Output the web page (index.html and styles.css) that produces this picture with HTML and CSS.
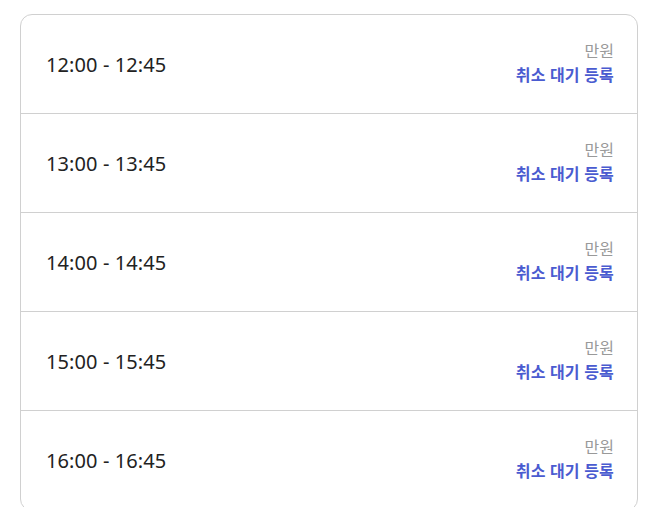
FILE: index.html
```html
<!DOCTYPE html>
<html lang="ko">
<head>
<meta charset="utf-8">
<link rel="stylesheet" href="styles.css">
</head>
<body>
<div class="card">
  <div class="row"><div class="time">12:00 - 12:45</div><div class="side"><div class="price">만원</div><a class="link">취소 대기 등록</a></div></div>
  <div class="row"><div class="time">13:00 - 13:45</div><div class="side"><div class="price">만원</div><a class="link">취소 대기 등록</a></div></div>
  <div class="row"><div class="time">14:00 - 14:45</div><div class="side"><div class="price">만원</div><a class="link">취소 대기 등록</a></div></div>
  <div class="row"><div class="time">15:00 - 15:45</div><div class="side"><div class="price">만원</div><a class="link">취소 대기 등록</a></div></div>
  <div class="row"><div class="time">16:00 - 16:45</div><div class="side"><div class="price">만원</div><a class="link">취소 대기 등록</a></div></div>
</div>
</body>
</html>
```
FILE: styles.css
```css
html, body { margin: 0; padding: 0; background: #fff; }
body {
  padding: 14px 19px 0 20px;
  font-family: "Noto Sans", "Noto Sans CJK KR", sans-serif;
}
.card {
  border: 1px solid #d0d0d0;
  border-radius: 12px;
  background: #fff;
}
.row {
  height: 98px;
  display: flex;
  align-items: center;
  justify-content: space-between;
  padding: 0 23px 0 25px;
  border-bottom: 1px solid #d0d0d0;
}
.time { font-size: 20px; color: #222; letter-spacing: 0.1px; }
.side { display: flex; flex-direction: column; align-items: flex-end; gap: 1px; margin-top: -2px; }
.price { font-size: 16px; color: #999; line-height: 23px; }
.link { font-size: 16px; font-weight: 700; color: #4a5bd0; line-height: 23px; letter-spacing: 0.2px; }
```
